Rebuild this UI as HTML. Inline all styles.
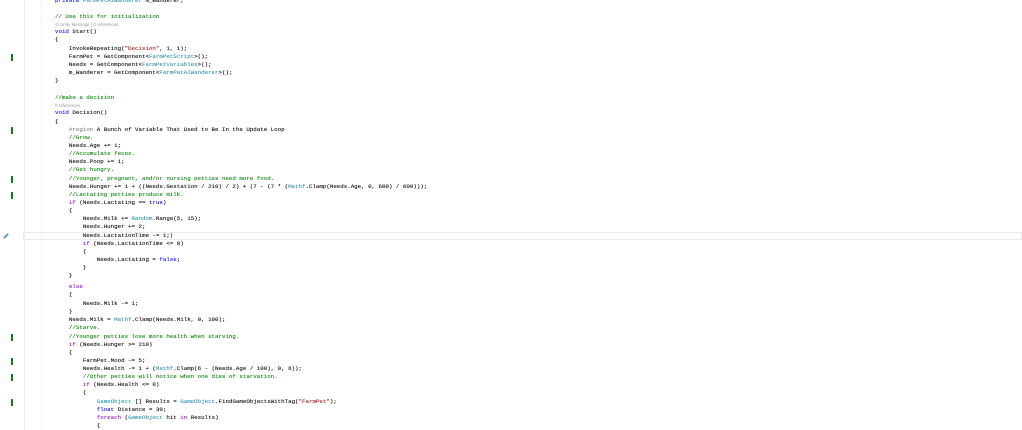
<!DOCTYPE html>
<html><head><meta charset="utf-8"><style>
body{margin:0;width:1022px;height:430px;overflow:hidden;background:#fff;position:relative;font-family:"Liberation Mono",monospace}
.l{position:absolute;left:55px;font-size:5.8px;white-space:pre;color:#000;line-height:8px;height:8px;-webkit-text-stroke:0.07px currentColor}
.k{color:#0000ff}.p{color:#8f08c4}.t{color:#2b91af}.c{color:#008000}.s{color:#a31515}.g{color:#808080}
.cl{font-family:"Liberation Sans",sans-serif;font-size:4.5px;color:#999;-webkit-text-stroke:0}
.bar{position:absolute;left:11px;width:2px;height:7px;background:#108010}
.vl{position:absolute;top:0;height:430px;width:1px;background:#eee}
</style></head><body>
<div class="vl" style="left:24px"></div>
<div class="vl" style="left:41px;background:#f3f3f3"></div>
<div style="position:absolute;left:23px;top:232px;width:999px;height:8px;border:1px solid #eaeaea;box-sizing:border-box"></div>
<div style="position:absolute;left:3px;top:235px;width:6px;height:2px;background:#6a9ad0;transform:rotate(-45deg)"></div>
<div class="bar" style="top:54px"></div>
<div class="bar" style="top:127px"></div>
<div class="bar" style="top:176px"></div>
<div class="bar" style="top:192px"></div>
<div class="bar" style="top:334px"></div>
<div class="bar" style="top:358px"></div>
<div class="bar" style="top:374px"></div>
<div class="bar" style="top:399px"></div>
<div class="l" style="top:-3px"><span class="k">private</span> <span class="t">FarmPetAIWanderer</span> m_Wanderer;</div>
<div class="l c" style="top:13px">// Use this for initialization</div>
<div class="l cl" style="top:21px">⊙ Unity Message | 0 references</div>
<div class="l" style="top:28px"><span class="k">void</span> Start()</div>
<div class="l" style="top:36px">{</div>
<div class="l" style="top:45px">    InvokeRepeating(<span class="s">"Decision"</span>, 1, 1);</div>
<div class="l" style="top:53px">    FarmPet = GetComponent&lt;<span class="t">FarmPetScript</span>&gt;();</div>
<div class="l" style="top:61px">    Needs = GetComponent&lt;<span class="t">FarmPetVariables</span>&gt;();</div>
<div class="l" style="top:69px">    m_Wanderer = GetComponent&lt;<span class="t">FarmPetAIWanderer</span>&gt;();</div>
<div class="l" style="top:77px">}</div>
<div class="l c" style="top:94px">//make a decision</div>
<div class="l cl" style="top:102px">0 references</div>
<div class="l" style="top:109px"><span class="k">void</span> Decision()</div>
<div class="l" style="top:118px">{</div>
<div class="l" style="top:126px">    <span class="g">#region</span> A Bunch of Variable That Used to Be In the Update Loop</div>
<div class="l c" style="top:134px">    //Grow.</div>
<div class="l" style="top:142px">    Needs.Age += 1;</div>
<div class="l c" style="top:150px">    //Accumulate feces.</div>
<div class="l" style="top:158px">    Needs.Poop += 1;</div>
<div class="l c" style="top:166px">    //Get hungry.</div>
<div class="l c" style="top:175px">    //Younger, pregnant, and/or nursing petties need more food.</div>
<div class="l" style="top:183px">    Needs.Hunger += 1 + ((Needs.Gestation / 210) / 2) + (7 - (7 * (<span class="t">Mathf</span>.Clamp(Needs.Age, 0, 600) / 600)));</div>
<div class="l c" style="top:191px">    //Lactating petties produce milk.</div>
<div class="l" style="top:199px">    <span class="p">if</span> (Needs.Lactating == <span class="k">true</span>)</div>
<div class="l" style="top:207px">    {</div>
<div class="l" style="top:215px">        Needs.Milk += <span class="t">Random</span>.Range(5, 15);</div>
<div class="l" style="top:223px">        Needs.Hunger += 2;</div>
<div class="l" style="top:232px">        Needs.LactationTime -= 1;|</div>
<div class="l" style="top:240px">        <span class="p">if</span> (Needs.LactationTime &lt;= 0)</div>
<div class="l" style="top:248px">        {</div>
<div class="l" style="top:256px">            Needs.Lactating = <span class="k">false</span>;</div>
<div class="l" style="top:264px">        }</div>
<div class="l" style="top:272px">    }</div>
<div class="l p" style="top:283px">    else</div>
<div class="l" style="top:291px">    {</div>
<div class="l" style="top:300px">        Needs.Milk -= 1;</div>
<div class="l" style="top:308px">    }</div>
<div class="l" style="top:316px">    Needs.Milk = <span class="t">Mathf</span>.Clamp(Needs.Milk, 0, 100);</div>
<div class="l c" style="top:324px">    //Starve.</div>
<div class="l c" style="top:333px">    //Younger petties lose more health when starving.</div>
<div class="l" style="top:341px">    <span class="p">if</span> (Needs.Hunger &gt;= 210)</div>
<div class="l" style="top:349px">    {</div>
<div class="l" style="top:357px">        FarmPet.Mood -= 5;</div>
<div class="l" style="top:365px">        Needs.Health -= 1 + (<span class="t">Mathf</span>.Clamp(6 - (Needs.Age / 100), 0, 6));</div>
<div class="l c" style="top:373px">        //Other petties will notice when one dies of starvation.</div>
<div class="l" style="top:381px">        <span class="p">if</span> (Needs.Health &lt;= 0)</div>
<div class="l" style="top:389px">        {</div>
<div class="l" style="top:398px">            <span class="t">GameObject</span> [] Results = <span class="t">GameObject</span>.FindGameObjectsWithTag(<span class="s">"FarmPet"</span>);</div>
<div class="l" style="top:406px">            <span class="k">float</span> Distance = 30;</div>
<div class="l" style="top:414px">            <span class="p">foreach</span> (<span class="t">GameObject</span> hit <span class="p">in</span> Results)</div>
<div class="l" style="top:422px">            {</div>
</body></html>
